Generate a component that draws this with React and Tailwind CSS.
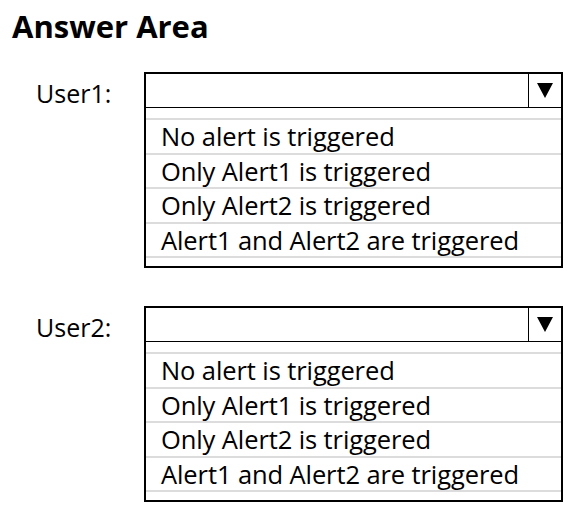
import React from 'react';

const OPTIONS = [
  'No alert is triggered',
  'Only Alert1 is triggered',
  'Only Alert2 is triggered',
  'Alert1 and Alert2 are triggered',
];

const Dropdown = ({ options }) => (
  <div className="w-[419px] border-2 border-black bg-white">
    <div className="flex h-[34px] border-b border-black">
      <div className="flex-1" />
      <div className="flex w-[33px] items-center justify-center border-l border-black">
        <svg width="16" height="15" viewBox="0 0 16 15">
          <polygon points="0,0 16,0 8,15" fill="#000" />
        </svg>
      </div>
    </div>
    <div className="pt-[10px] pb-[8px]">
      {options.map((opt) => (
        <div
          key={opt}
          className="flex h-[34.5px] items-center border-t-2 border-[#dcdcdc] pl-[15px] pt-[1px] text-[25.5px] leading-none tracking-[-0.1px] text-black font-['Open_Sans',sans-serif]"
        >
          {opt}
        </div>
      ))}
      <div className="h-[2px] bg-[#dcdcdc]" />
    </div>
  </div>
);

const Row = ({ label }) => (
  <div className="flex items-start">
    <div className="w-[144px] pl-[36px] pt-[6px] text-[25px] leading-[30px] text-black font-['Open_Sans',sans-serif]">
      {label}
    </div>
    <Dropdown options={OPTIONS} />
  </div>
);

export default function App() {
  return (
    <div className="min-h-[508px] w-[569px] bg-white">
      <h1 className="pl-[12px] pt-[6px] text-[31px] font-bold leading-[40px] text-black font-['Open_Sans',sans-serif]">
        Answer Area
      </h1>
      <div className="mt-[26px] flex flex-col gap-[38px]">
        <Row label="User1:" />
        <Row label="User2:" />
      </div>
    </div>
  );
}
